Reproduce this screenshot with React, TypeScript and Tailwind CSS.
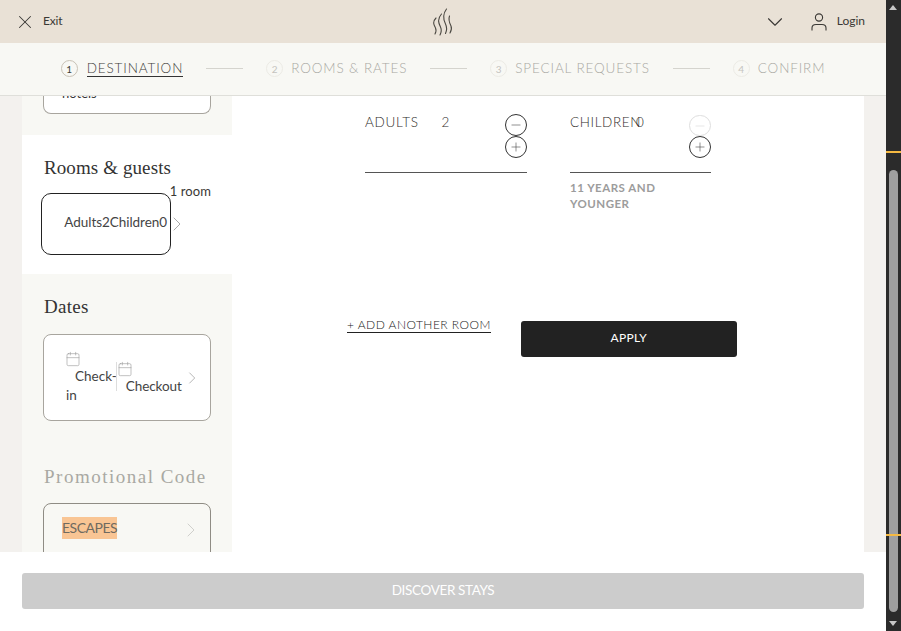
import React from "react";
import { X, ChevronDown, ChevronRight, Calendar, Minus, Plus } from "lucide-react";

const Step = ({ n, label, active }: { n: number; label: string; active?: boolean }) => (
  <div className={active ? "flex items-center gap-[9px] text-[#3f3d3a]" : "flex items-center gap-[8px] text-[#a9a8a3]"}>
    <span className={active ? "flex h-[17px] w-[17px] items-center justify-center rounded-full border border-[#c9c2b6] text-[10px] leading-none" : "flex h-[17px] w-[17px] items-center justify-center rounded-full border border-[#ecebe5] text-[10px] leading-none text-[#c4c3be]"}>{n}</span>
    <span className={active ? "border-b border-[#333] text-[13.5px] font-light leading-[16px] tracking-[0.87px]" : "border-b border-transparent text-[13.5px] font-light leading-[16px] tracking-[0.87px]"}>{label}</span>
  </div>
);

const Line = () => <div className="h-px w-[37px] bg-[#d5d4ce]" />;

const Round = ({ faint, plus }: { faint?: boolean; plus?: boolean }) => (
  <span className={faint ? "flex h-[21px] w-[22px] items-center justify-center rounded-full border border-[#dedede] text-[#d8d8d8]" : "flex h-[22px] w-[22px] items-center justify-center rounded-full border border-[#333] text-[#444]"}>
    {plus ? <Plus size={14} strokeWidth={1} /> : <Minus size={14} strokeWidth={1} />}
  </span>
);

const Flame = () => (
  <svg width="24" height="28" viewBox="0 0 24 28" fill="none" stroke="#4a4741" strokeWidth="1.1" strokeLinecap="round" className="ml-[7px]">
    <path d="M5 10C1 14 3 17 4.500 20c1 2 .8 3.500-.5 6" />
    <path d="M10.500 6C6 11 7.500 15 9.500 19c1.200 2.500 1 5-.5 8" />
    <path d="M15.500 1C11 7 12.500 12 14.500 16c1.500 3 1.500 6 0 9.500" />
    <path d="M18.500 8c-1.500 4 0 7 1.500 10 1 2.500.5 4.500-1 7" />
  </svg>
);

const UserIcon = () => (
  <svg width="16" height="18" viewBox="0 0 16 18" fill="none" stroke="#3a3835" strokeWidth="1.1">
    <circle cx="8" cy="4.500" r="3.600" />
    <path d="M1 17.500V15C1 12.500 3 11.500 5 11.500h6c2 0 4 1 4 3.500v2.500" />
  </svg>
);

export default function App() {
  return (
    <div className="flex h-[631px] w-[901px] overflow-hidden bg-white font-['Lato','Noto_Sans',sans-serif] text-[#3a3835]">
      <div className="flex w-[886px] flex-col">
        <header className="flex h-[43px] shrink-0 items-center justify-between bg-[#e9e1d6] pl-[14px] pr-[21px]">
          <div className="flex w-[200px] items-center gap-[7px] text-[12px] tracking-[-0.2px]">
            <X size={22} strokeWidth={1.1} />
            <span className="-mt-px">Exit</span>
          </div>
          <Flame />
          <div className="flex w-[200px] items-center justify-end text-[12px]">
            <ChevronDown size={26} strokeWidth={1} className="mr-[23px]" />
            <UserIcon />
            <span className="-mt-px ml-[10px]">Login</span>
          </div>
        </header>

        <nav className="flex h-[53px] shrink-0 items-center justify-center gap-[23px] border-b border-[#dfdfda] bg-[#f8f8f4] pb-px">
          <Step n={1} label="DESTINATION" active />
          <Line />
          <Step n={2} label="ROOMS & RATES" />
          <Line />
          <Step n={3} label="SPECIAL REQUESTS" />
          <Line />
          <Step n={4} label="CONFIRM" />
        </nav>

        <main className="flex h-[456px] overflow-hidden bg-[#f3f1ee] pl-[22px] pr-[22px]">
          <aside className="w-[210px] shrink-0 bg-[#f8f8f4]">
            <div className="h-[39px] px-[21px]">
              <div className="flex h-[18px] items-start overflow-hidden rounded-b-[8px] border border-t-0 border-[#a8a59e] bg-white pl-[18px]">
                <span className="-mt-[10px] text-[13px] leading-[14px] text-[#333]">hotels</span>
              </div>
            </div>
            <section className="h-[139px] bg-white px-[19px] pt-[22px]">
              <h2 className="pl-[3px] font-['Liberation_Serif',serif] text-[19px] leading-[22px] tracking-[0.1px] text-[#333]">Rooms &amp; guests</h2>
              <div className="mt-[5px] flex h-[15px] justify-end pr-[2px] text-[13px] leading-[15px] tracking-[0.1px]">1 room</div>
              <div className="flex items-start">
                <div className="-mt-[6px] flex h-[62px] w-[130px] items-center justify-end rounded-[10px] border border-[#222] pb-[4px] pr-[3px] text-[13.5px] tracking-[-0.05px] text-[#444]">Adults2Children0</div>
                <ChevronRight size={24} strokeWidth={1} className="-ml-[6px] mt-[13px] text-[#aaa]" />
              </div>
            </section>
            <section className="h-[182px] px-[21px] pt-[22px]">
              <h2 className="pl-px font-['Liberation_Serif',serif] text-[19px] leading-[22px] tracking-[0.3px] text-[#333]">Dates</h2>
              <div className="mt-[16px] flex h-[87px] items-start rounded-[8px] border border-[#a8a59e] bg-white pl-[22px] pr-[8px] pt-[17px]">
                <div className="w-[50px] text-[13.5px] leading-[19px] text-[#444]">
                  <Calendar size={16} strokeWidth={0.9} className="-ml-[1px] -mt-[1px] text-[#999]" />
                  <div className="indent-[9px]">Check-in</div>
                </div>
                <div className="mt-[10px] h-[29px] w-px bg-[#ddd]" />
                <div className="pt-[10px] text-[13.5px] leading-[19px] tracking-[-0.1px] text-[#444]">
                  <Calendar size={16} strokeWidth={0.9} className="-mt-[1px] text-[#999]" />
                  <div className="pl-[9px]">Checkout</div>
                </div>
                <ChevronRight size={24} strokeWidth={1} className="ml-auto mt-[14px] text-[#aaa]" />
              </div>
            </section>
            <section className="px-[21px] pt-[10px]">
              <h2 className="pl-px font-['Liberation_Serif',serif] text-[19px] leading-[22px] tracking-[1.5px] text-[#a9a9a3]">Promotional Code</h2>
              <div className="mt-[15px] flex h-[60px] items-start justify-between rounded-[8px] border border-[#8f8c84] pl-[18px] pr-[7px] pt-[13px] text-[14px] text-[#6f6a60]">
                <span className="bg-[#f9c594] leading-[22px] tracking-[-0.5px]">ESCAPES</span>
                <ChevronRight size={24} strokeWidth={1} className="mt-[1px] text-[#d0d0cc]" />
              </div>
            </section>
          </aside>

          <div className="min-w-0 flex-1 bg-white pt-[17px]">
            <div className="flex">
              <div className="ml-[133px] flex h-[60px] w-[162px] justify-between border-b border-[#555]">
                <div className="flex gap-[23px] text-[13.5px] font-light leading-[18px] tracking-[0.7px] text-[#2f2d2a]">
                  <span>ADULTS</span>
                  <span>2</span>
                </div>
                <div className="flex w-[22px] flex-col pt-[1px]">
                  <Round />
                  <Round plus />
                </div>
              </div>
              <div className="ml-[43px] w-[141px]">
                <div className="flex h-[60px] justify-between border-b border-[#555]">
                  <div className="flex text-[13.5px] font-light leading-[18px] tracking-[0.6px] text-[#2f2d2a]">
                    <span className="w-[66px]">CHILDREN</span>
                    <span>0</span>
                  </div>
                  <div className="flex w-[22px] flex-col pt-[2px]">
                    <Round faint />
                    <Round plus />
                  </div>
                </div>
                <p className="mt-[7px] text-[11.5px] font-bold leading-[16px] tracking-[0.5px] text-[#9c9c9c]">11 YEARS AND YOUNGER</p>
              </div>
            </div>
            <div className="ml-[115px] mt-[115px] flex items-start gap-[30px]">
              <button className="-mt-[10px] border-b border-[#222] text-[12px] font-light leading-[15px] tracking-[0.47px] text-[#222]">+ ADD ANOTHER ROOM</button>
              <button className="-mt-[6px] h-[36px] w-[216px] rounded-[3px] bg-[#222] pb-[2px] text-[12px] tracking-[0.3px] text-white">APPLY</button>
            </div>
          </div>
        </main>

        <footer className="flex flex-1 items-start bg-white px-[22px] pt-[21px]">
          <button className="h-[36px] w-full rounded-[3px] bg-[#cccccc] pb-[2px] text-[13.5px] tracking-[-0.35px] text-white">DISCOVER STAYS</button>
        </footer>
      </div>

      <div className="relative flex w-[15px] flex-col items-center bg-[#2b2b2b] pt-[170px]">
        <div className="h-[442px] w-[9px] rounded-full bg-[#9f9f9f]" />
        <span className="absolute left-0 top-[151px] h-[2px] w-full bg-[#f5b942]" />
        <span className="absolute left-0 top-[534px] h-[2px] w-full bg-[#f5b942]" />
        <span className="absolute left-[3px] top-[5px] h-0 w-0 border-x-[4.5px] border-b-[5px] border-x-transparent border-b-[#c8c8c8]" />
        <span className="absolute bottom-[5px] left-[3px] h-0 w-0 border-x-[4.5px] border-t-[5px] border-x-transparent border-t-[#c8c8c8]" />
      </div>
    </div>
  );
}
